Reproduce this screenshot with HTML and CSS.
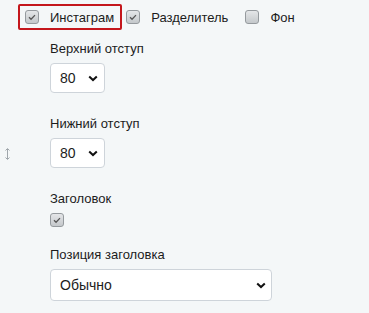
FILE: index.html
```html
<!DOCTYPE html>
<html lang="ru">
<head>
    <meta charset="UTF-8">
    <title>Настройки блока</title>
    <link rel="stylesheet" href="styles.css">
</head>
<body>
    <div class="panel">
        <span class="resize-handle">
            <svg width="7" height="12" viewBox="0 0 7 12"><path d="M3.5 1v10" stroke="#9fa6ab" stroke-width="1" fill="none"/><path d="M1.5 2.5L3.5 0.5 5.5 2.5M1.5 9.5L3.5 11.5 5.5 9.5" stroke="#9fa6ab" stroke-width="1" fill="none"/></svg>
        </span>

        <div class="toggles">
            <label class="toggle toggle-active">
                <span class="check checked"><svg viewBox="0 0 14 14"><path d="M3.5 7.2l2.4 2.4 4.6-4.8" stroke="#555" stroke-width="1.5" fill="none"/></svg></span>
                Инстаграм
            </label>
            <label class="toggle">
                <span class="check checked"><svg viewBox="0 0 14 14"><path d="M3.5 7.2l2.4 2.4 4.6-4.8" stroke="#555" stroke-width="1.5" fill="none"/></svg></span>
                Разделитель
            </label>
            <label class="toggle">
                <span class="check"></span>
                Фон
            </label>
        </div>

        <div class="fields">
            <div class="field">
                <div class="field-label">Верхний отступ</div>
                <div class="select select-small">
                    <select><option>80</option></select>
                    <svg class="chevron" width="10" height="7" viewBox="0 0 10 7"><path d="M1.2 1.5l3.8 3.6 3.8-3.6" stroke="#111" stroke-width="2" fill="none"/></svg>
                </div>
            </div>
            <div class="field">
                <div class="field-label">Нижний отступ</div>
                <div class="select select-small">
                    <select><option>80</option></select>
                    <svg class="chevron" width="10" height="7" viewBox="0 0 10 7"><path d="M1.2 1.5l3.8 3.6 3.8-3.6" stroke="#111" stroke-width="2" fill="none"/></svg>
                </div>
            </div>
            <div class="field field-check">
                <div class="field-label">Заголовок</div>
                <span class="check checked"><svg viewBox="0 0 14 14"><path d="M3.5 7.2l2.4 2.4 4.6-4.8" stroke="#555" stroke-width="1.5" fill="none"/></svg></span>
            </div>
            <div class="field">
                <div class="field-label">Позиция заголовка</div>
                <div class="select select-wide">
                    <select><option>Обычно</option></select>
                    <svg class="chevron" width="10" height="7" viewBox="0 0 10 7"><path d="M1.2 1.5l3.8 3.6 3.8-3.6" stroke="#111" stroke-width="2" fill="none"/></svg>
                </div>
            </div>
        </div>
    </div>
</body>
</html>
```

FILE: styles.css
```css
body {
    margin: 0;
    background-color: #f4f7f8;
    font-family: 'Liberation Sans', Arial, sans-serif;
    font-size: 13px;
    color: #1c1c1c;
}

.panel {
    position: relative;
    height: 313px;
}

.resize-handle {
    position: absolute;
    left: 4px;
    top: 148px;
}

.toggles {
    display: flex;
    align-items: center;
    padding: 4px 0 0 18px;
}
.toggle {
    display: flex;
    align-items: center;
    gap: 11px;
    height: 22px;
    padding: 0 11px 0 5px;
    border: 2px solid transparent;
}
.toggle + .toggle {
    padding-left: 2px;
}
.toggle-active {
    border-color: #c4161c;
    border-radius: 2px;
    padding-right: 6px;
}

.check {
    display: inline-block;
    width: 12px;
    height: 12px;
    border: 1px solid #959a9e;
    border-radius: 3px;
    background: linear-gradient(#e4e6e8, #c4c8cb);
}
.check svg {
    display: block;
    width: 12px;
    height: 12px;
}

.fields {
    padding: 11px 0 0 50px;
}
.field {
    margin-bottom: 23px;
}
.field-check {
    margin-bottom: 20px;
}
.field-label {
    margin-bottom: 7px;
}
.field > .check {
    display: block;
}

.select {
    position: relative;
    display: inline-block;
}
.select select {
    appearance: none;
    -webkit-appearance: none;
    font-family: 'Liberation Sans', Arial, sans-serif;
    font-size: 14px;
    color: #1c1c1c;
    background: #fff;
    border: 1px solid #ced4da;
    border-radius: 4px;
    padding: 0 0 0 9px;
    outline: none;
}
.select-small select {
    width: 55px;
    height: 30px;
}
.select-wide select {
    width: 222px;
    height: 32px;
}
.chevron {
    position: absolute;
    right: 7px;
    top: 50%;
    margin-top: -3px;
    pointer-events: none;
}
.select-wide .chevron {
    right: 6px;
}
```
